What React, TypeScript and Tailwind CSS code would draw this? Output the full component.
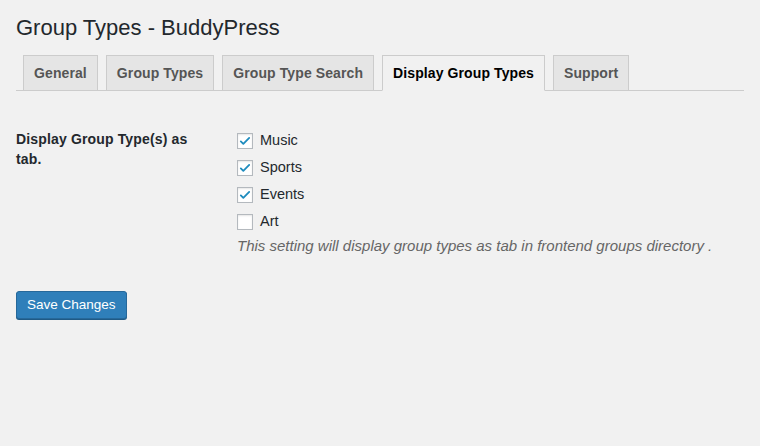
import React from "react";

const tabs = ["General", "Group Types", "Group Type Search", "Display Group Types", "Support"];
const types = [
  { name: "Music", checked: true },
  { name: "Sports", checked: true },
  { name: "Events", checked: true },
  { name: "Art", checked: false },
];

const Check = ({ checked }: { checked: boolean }) => (
  <span className="w-4 h-4 shrink-0 bg-white border border-[#b4b9be] shadow-[inset_0_1px_2px_rgba(0,0,0,0.1)] flex items-center justify-center">
    {checked && (
      <svg width="14" height="14" viewBox="0 0 20 20">
        <path d="M4 10.5l3.6 3.6L16 5.6" fill="none" stroke="#1e8cbe" strokeWidth="2.6" strokeLinecap="round" strokeLinejoin="round" />
      </svg>
    )}
  </span>
);

export default function App() {
  return (
    <div
      className="min-h-[446px] w-full bg-[#f1f1f1] text-[#23282d] px-4 pt-[13px]"
      style={{ fontFamily: '"Liberation Sans", Arial, sans-serif' }}
    >
      <h1 className="text-[22px] leading-[29px] font-normal">Group Types - BuddyPress</h1>

      <div className="mt-[13px] flex items-end border-b border-[#ccc] pl-[7px] gap-[8px]">
        {tabs.map((t) => {
          const active = t === "Display Group Types";
          return (
            <div
              key={t}
              className={
                active
                  ? "-mb-px border border-[#ccc] border-b-[#f1f1f1] bg-[#f1f1f1] px-[10px] h-[36px] flex items-center text-[14px] tracking-[0.1px] font-bold text-black"
                  : "border border-[#ccc] border-b-0 bg-[#e5e5e5] px-[10px] h-[35px] flex items-center text-[14px] tracking-[0.1px] font-bold text-[#555]"
              }
            >
              {t}
            </div>
          );
        })}
      </div>

      <div className="flex mt-[38px]">
        <div className="w-[221px] shrink-0 text-[14px] leading-[20px] tracking-[0.15px] font-bold pr-[30px]">
          Display Group Type(s) as tab.
        </div>
        <div className="flex flex-col -mt-[2px]">
          {types.map((g) => (
            <label key={g.name} className="flex items-center gap-[7px] h-[27px] text-[14.5px]">
              <Check checked={g.checked} />
              <span>{g.name}</span>
            </label>
          ))}
          <p className="mt-[1px] text-[15px] leading-[20px] italic text-[#666]">
            This setting will display group types as tab in frontend groups directory .
          </p>
        </div>
      </div>

      <button className="mt-[35px] h-[28px] px-[10px] rounded-[3px] bg-[#2f7fba] border border-[#26689a] shadow-[0_1px_0_#1f5a86] text-white text-[13.5px]">
        Save Changes
      </button>
    </div>
  );
}
